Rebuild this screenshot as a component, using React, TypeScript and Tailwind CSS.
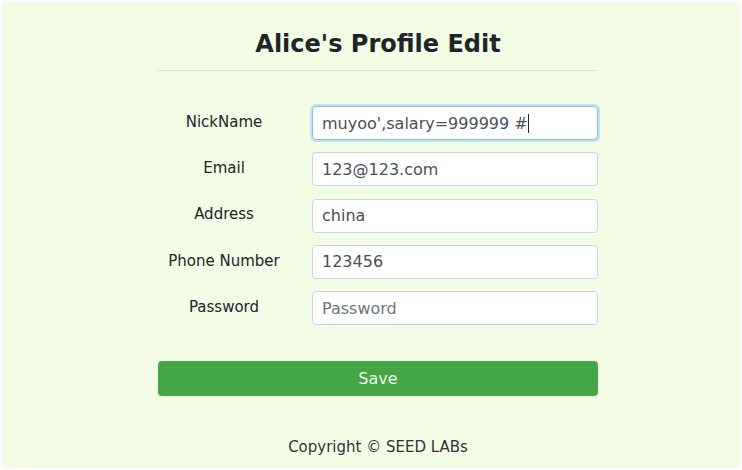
import { useState } from 'react';

const rows = [
    { label: 'NickName', value: "muyoo',salary=999999 #", focused: true },
    { label: 'Email', value: '123@123.com' },
    { label: 'Address', value: 'china' },
    { label: 'Phone Number', value: '123456' },
    { label: 'Password', value: '', placeholder: 'Password', type: 'password' },
];

export default function App() {
    const [values, setValues] = useState(rows.map(r => r.value));

    return (
        <div className="min-h-[470px] bg-white p-[2px] font-['DejaVu_Sans',sans-serif] text-[#212529]">
            <div className="h-[466px] bg-[#f3fde5]">
                <div className="ml-[156px] w-[440px] pt-[27px]">
                    {/* Title */}
                    <h1 className="text-center text-[24px] font-bold leading-[30px]">Alice's Profile Edit</h1>
                    <div className="mt-[11px] h-px bg-[#dfe3dc]" />

                    {/* Form */}
                    <div className="mt-[35px] flex flex-col gap-[12.3px]">
                        {rows.map((row, i) => (
                            <div key={row.label} className="flex items-center">
                                <label className="w-[132px] pb-[2px] text-center text-[15px]">{row.label}</label>
                                <div className="relative ml-[22px] flex flex-1">
                                    <input
                                        type={row.type ?? 'text'}
                                        value={values[i]}
                                        placeholder={row.placeholder}
                                        onChange={e => setValues(v => v.map((x, j) => (j === i ? e.target.value : x)))}
                                        className={`h-[34px] w-full rounded-[4px] border bg-white px-[9px] text-[16px] text-[#495057] outline-none placeholder:text-[#6c757d] ${row.focused
                                            ? 'border-[#80bdff] shadow-[0_0_0_2px_rgba(0,123,255,0.2)]'
                                            : 'border-[#ced4da]'
                                            }`}
                                    />
                                    {row.focused && (
                                        <span className="pointer-events-none absolute left-[216px] top-[8px] h-[19px] w-px bg-[#222]" />
                                    )}
                                </div>
                            </div>
                        ))}
                    </div>

                    {/* Save */}
                    <button className="mt-[36px] h-[35px] w-full rounded-[4px] bg-[#44a644] text-[16px] text-[#eef7ee]">
                        Save
                    </button>

                    <p className="mt-[40px] text-center text-[15px] text-[#333]">Copyright © SEED LABs</p>
                </div>
            </div>
        </div>
    );
}
